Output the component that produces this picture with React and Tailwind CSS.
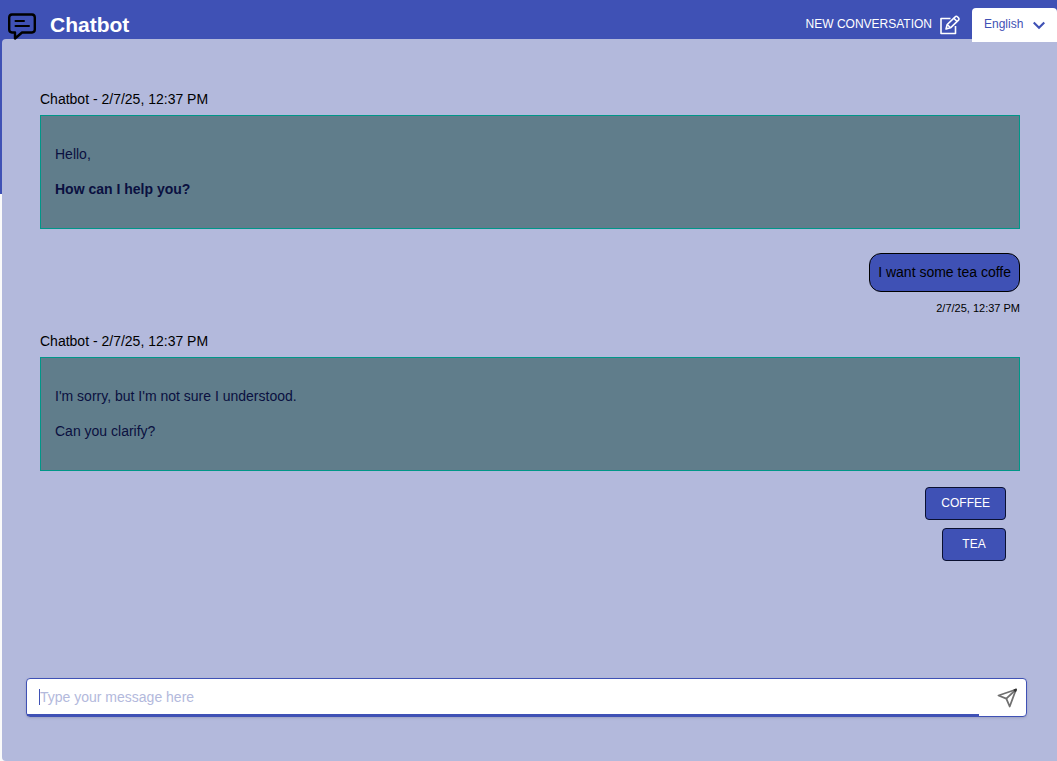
import React, { useState } from 'react';

const messages = [
  {
    id: 1,
    from: 'bot',
    date: '2/7/25, 12:37 PM',
    lines: [{ text: 'Hello,' }, { text: 'How can I help you?', bold: true }],
  },
  { id: 2, from: 'user', date: '2/7/25, 12:37 PM', text: 'I want some tea coffe' },
  {
    id: 3,
    from: 'bot',
    date: '2/7/25, 12:37 PM',
    lines: [{ text: "I'm sorry, but I'm not sure I understood." }, { text: 'Can you clarify?' }],
    choices: ['COFFEE', 'TEA'],
  },
];

const ChatIcon = () => (
  <svg className="h-[34px] w-7 shrink-0" viewBox="0 -5 28 34" fill="none" stroke="#000" strokeLinecap="round" strokeLinejoin="round">
    <path
      strokeWidth="2.400"
      d="M4 1.500h20a3 3 0 0 1 2.800 3v12a3 3 0 0 1-2.800 3H14L7 25.500v-6H4a3 3 0 0 1-2.800-3v-12a3 3 0 0 1 2.800-3z"
    />
    <path strokeWidth="2" d="M7.500 8h8.500M7.500 13h13.500" />
  </svg>
);

const EditIcon = () => (
  <svg className="h-5 w-5 shrink-0" viewBox="0 0 20 20" fill="none" stroke="currentColor" strokeWidth="1.600" strokeLinejoin="round">
    <path d="M10.500 3.500H1v15h14.500V11" />
    <path d="M6 14l1.200-4.500 8-7.700a1.500 1.500 0 0 1 2.200 0l1.100 1.100a1.500 1.500 0 0 1 0 2.200l-8 7.700z" />
    <path d="M13.800 3.200l3.300 3.300M7.200 9.500l3.300 3.300" />
  </svg>
);

const SendIcon = () => (
  <svg className="h-5 w-5" viewBox="0 0 20 20" fill="none" stroke="#707070" strokeWidth="1.800" strokeLinejoin="round">
    <path d="M19 1.500L1.500 7.500l7.800 3.200 3.400 7.800z" />
    <path d="M19 1.500l-9.700 9.200" />
    <path d="M17.500 2l1.500-.5-.5 1.500z" stroke="#333" />
  </svg>
);

const BotMessage = ({ message }) => (
  <div>
    <div className="text-sm text-black">Chatbot - {message.date}</div>
    <div className="mt-1.5 flex flex-col gap-[15px] border border-[#009688] bg-[#607d8b] px-3.5 pt-7 pb-[29px] text-sm text-[#0a1040]">
      {message.lines.map((line) => (
        <p key={line.text} className={line.bold ? 'font-bold' : ''}>
          {line.text}
        </p>
      ))}
    </div>
    {message.choices && (
      <div className="mt-4 mr-3.5 flex flex-col items-end gap-2">
        {message.choices.map((choice) => (
          <button
            key={choice}
            type="button"
            className="h-[33px] min-w-16 rounded border border-[#0a1030] bg-[#3f51b5] px-[15px] pb-0.5 text-xs text-white"
          >
            {choice}
          </button>
        ))}
      </div>
    )}
  </div>
);

const UserMessage = ({ message }) => (
  <div className="flex flex-col items-end">
    <div className="rounded-xl border border-black bg-[#3f51b5] px-2 py-[9px] text-sm leading-[19px] text-black">
      {message.text}
    </div>
    <div className="mt-2 text-[11px] leading-4 text-black">{message.date}</div>
  </div>
);

const Header = () => (
  <header className="relative z-10 flex h-[39px] items-start pt-2 text-white">
    <div className="flex h-[34px] items-center gap-[14px] pl-2">
      <ChatIcon />
      <h1 className="text-[21px] leading-7 font-bold">Chatbot</h1>
    </div>
    <div className="ml-auto flex h-[34px] items-center">
      <button type="button" className="mr-3 flex items-center gap-2 text-xs">
        <span className="pb-0.5">NEW CONVERSATION</span>
        <EditIcon />
      </button>
      <div className="relative">
        <select
          aria-label="Language"
          className="block h-[34px] w-[85px] appearance-none rounded-t bg-white pb-0.5 pl-3 text-xs text-[#3f51b5] outline-none"
        >
          <option>English</option>
          <option>French</option>
        </select>
        <svg
          className="pointer-events-none absolute top-3 right-3 h-3 w-3"
          viewBox="0 0 12 12"
          fill="none"
          stroke="#3f51b5"
          strokeWidth="2.200"
        >
          <path d="M.7 2.500L6 7.800 11.300 2.500" />
        </svg>
      </div>
    </div>
  </header>
);

const App = () => {
  const [text, setText] = useState('');

  return (
    <div className="flex min-h-screen flex-col bg-[linear-gradient(#3f51b5_194px,#fafafa_0)] font-['Liberation_Sans',Arial,sans-serif]">
      <Header />
      <main className="ml-0.5 flex flex-1 flex-col rounded-l bg-[#b3b9dc] pt-[50px] pb-11">
        <div className="mr-[37px] ml-[38px] flex flex-col">
          <BotMessage message={messages[0]} />
          <div className="mt-6 mb-[15px]">
            <UserMessage message={messages[1]} />
          </div>
          <BotMessage message={messages[2]} />
        </div>

        <form
          onSubmit={(e) => e.preventDefault()}
          className="mt-auto mr-[30px] ml-6 flex h-[39px] rounded border border-[#3f51b5] bg-white shadow-sm"
        >
          <div className="flex flex-1 items-center border-b-2 border-[#3f51b5] pl-3">
            <span className="h-4 w-px bg-[#3f51b5]" />
            <input
              type="text"
              aria-label="Message"
              placeholder="Type your message here"
              value={text}
              onChange={(e) => setText(e.target.value)}
              className="w-full text-sm text-[#3f51b5] outline-none placeholder:text-[#b3b9dc]"
            />
          </div>
          <button type="submit" aria-label="Send" className="flex w-[47px] items-center justify-center pl-2">
            <SendIcon />
          </button>
        </form>
      </main>
    </div>
  );
};

export default App;
